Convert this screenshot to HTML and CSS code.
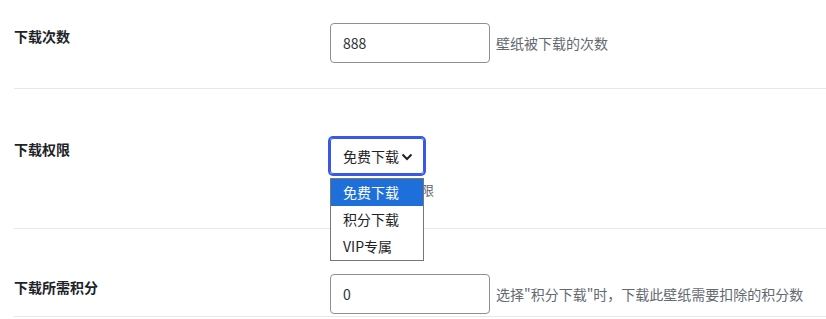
FILE: index.html
```html
<!DOCTYPE html>
<html lang="zh-CN">
<head>
    <meta charset="UTF-8">
    <meta name="viewport" content="width=device-width, initial-scale=1.0">
    <title>壁纸设置</title>
    <link rel="stylesheet" href="styles.css">
</head>
<body>
    <div class="form-table">
        <div class="form-row row-count">
            <div class="field-label">下载次数</div>
            <div class="field">
                <div class="field-line">
                    <input type="text" class="text-input" value="888">
                    <span class="hint">壁纸被下载的次数</span>
                </div>
            </div>
        </div>
        <div class="form-row row-perm">
            <div class="field-label">下载权限</div>
            <div class="field">
                <div class="select-wrap">
                    <div class="select-box">
                        <span>免费下载</span>
                        <svg class="chevron" width="12" height="8" viewBox="0 0 12 8"><path d="M1.5 1.5 L6 6 L10.5 1.5" fill="none" stroke="#1d2327" stroke-width="2"/></svg>
                    </div>
                    <ul class="select-list">
                        <li class="active">免费下载</li>
                        <li>积分下载</li>
                        <li>VIP专属</li>
                    </ul>
                </div>
                <p class="description">选择壁纸下载权限</p>
            </div>
        </div>
        <div class="form-row row-points">
            <div class="field-label">下载所需积分</div>
            <div class="field">
                <div class="field-line">
                    <input type="text" class="text-input" value="0">
                    <span class="hint">选择"积分下载"时，下载此壁纸需要扣除的积分数</span>
                </div>
            </div>
        </div>
    </div>
</body>
</html>
```

FILE: styles.css
```css
body {
    margin: 0;
    background: #ffffff;
    font-family: "Noto Sans CJK SC", "Noto Sans", sans-serif;
    font-size: 14px;
    color: #1d2327;
}

ul, li, p {
    margin: 0;
    padding: 0;
}

.form-table {
    margin-left: 14px;
}

.form-row {
    display: grid;
    grid-template-columns: 316px 1fr;
    border-bottom: 1px solid #e8e8e8;
}

.row-count {
    padding: 23px 0 25px 0;
}

.row-perm {
    padding: 47px 0 28px 0;
}

.row-points {
    padding: 45px 0 2px 0;
}

.field-label {
    padding-top: 3px;
    line-height: 20px;
    font-weight: 700;
    color: #1d2327;
}

.field-line {
    display: flex;
    align-items: center;
    gap: 6px;
}

.text-input {
    box-sizing: border-box;
    width: 160px;
    height: 40px;
    padding: 0 12px;
    border: 1px solid #8c8f94;
    border-radius: 4px;
    font-family: "Noto Sans CJK SC", "Noto Sans", sans-serif;
    font-size: 14px;
    color: #2c3338;
    outline: none;
}

.hint,
.description {
    font-size: 14px;
    color: #646970;
}

.select-wrap {
    position: relative;
    width: 94px;
    padding-top: 2px;
}

.select-box {
    box-sizing: border-box;
    display: flex;
    align-items: center;
    height: 36px;
    padding-left: 12px;
    border: 1px solid #3858e9;
    border-radius: 3px;
    box-shadow: 0 0 0 2px #3858e9;
    color: #1d2327;
    line-height: 20px;
}

.chevron {
    margin-left: 2px;
    margin-top: 2px;
}

.select-list {
    position: absolute;
    top: 42px;
    left: 0;
    box-sizing: border-box;
    width: 94px;
    list-style: none;
    background: #ffffff;
    border: 1px solid #767676;
    z-index: 10;
}

.select-list li {
    height: 27px;
    line-height: 27px;
    padding-left: 12px;
    color: #1d2327;
}

.select-list li.active {
    background: #1e6fd9;
    color: #ffffff;
}

.description {
    margin-top: 6px;
    line-height: 20px;
    font-size: 13px;
}
```
